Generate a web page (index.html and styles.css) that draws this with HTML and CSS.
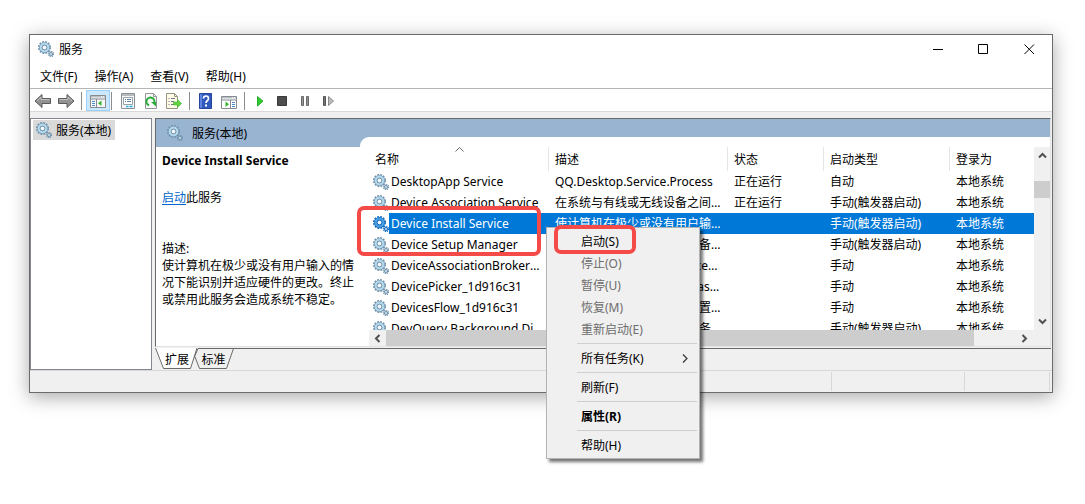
FILE: index.html
```html
<!DOCTYPE html>
<html lang="zh-CN">
<head>
<meta charset="utf-8">
<title>服务</title>
<link rel="stylesheet" href="styles.css">
</head>
<body>
<svg class="defs" aria-hidden="true">
  <symbol id="gear" viewBox="0 0 16 16">
    <circle class="gear-edge" cx="6.5" cy="6.5" r="5.7" fill="none" stroke-width="1.7" stroke-dasharray="1.8 1.18"/>
    <circle class="gear-edge" cx="6.5" cy="6.5" r="3.8" fill="none" stroke-width="3.4"/>
    <circle class="gear-ring" cx="6.5" cy="6.5" r="3.8" fill="none" stroke-width="2.3"/>
    <circle class="gear-edge" cx="6.5" cy="6.5" r="2.3" fill="#f6fafc" stroke-width=".9"/>
    <circle class="gear-edge" cx="13" cy="13" r="2.5" fill="none" stroke-width="1.4" stroke-dasharray="1.1 .86"/>
    <circle class="gear-edge" cx="13" cy="13" r="1.5" fill="#dcebf3" stroke-width="1.1"/>
  </symbol>
</svg>
<main class="window">
  <header class="titlebar">
    <svg class="icon"><use href="#gear"/></svg>
    <h1 class="title">服务</h1>
    <button class="caption" aria-label="最小化"><svg viewBox="0 0 11 11"><path d="M1 5.5h10"/></svg></button>
    <button class="caption" aria-label="最大化"><svg viewBox="0 0 11 11"><path d="M.5 .5h9v9h-9z"/></svg></button>
    <button class="caption" aria-label="关闭"><svg viewBox="0 0 11 11"><path d="M.5 .5l9.500 9.500M10 .5L.5 10"/></svg></button>
  </header>
  <nav class="menubar">
    <button>文件(F)</button><button>操作(A)</button><button>查看(V)</button><button>帮助(H)</button>
  </nav>
  <div class="toolbar">
    <button aria-label="后退"><svg class="wide" viewBox="0 0 18 16"><path d="M1 8l7-6.500v4h8.500v5H8v4z" fill="#929292" stroke="#595959"/><path d="M3 7.800l4-3.600v2.300h8.500" fill="none" stroke="#c2c2c2"/></svg></button>
    <button aria-label="前进"><svg class="wide" viewBox="0 0 18 16"><path d="M17 8l-7-6.500v4H1.500v5H10v4z" fill="#929292" stroke="#595959"/><path d="M2.500 6.500H11V4l4 3.800" fill="none" stroke="#c2c2c2"/></svg></button>
    <i class="rule"></i>
    <button class="pressed" aria-label="显示/隐藏控制台树"><svg viewBox="0 0 16 16"><path d="M.5 2.500h15v12H.5z" fill="#f7f7f7" stroke="#858b91"/><path d="M1 3h14v1.500H1z" fill="#b9c0c6"/><path d="M11 3.700h1M13 3.700h1" stroke="#fff"/><path d="M1 6h14M6.500 6v8" stroke="#858b91"/><path d="M2 8.500h3M2 10.500h3M2 12.500h3" stroke="#4f8dc8"/><path d="M11.500 7.500v5.500L8 10.200z" fill="#35b52c"/></svg></button>
    <i class="rule"></i>
    <button aria-label="属性"><svg viewBox="0 0 16 16"><path d="M1.500 .5h13v15h-13z" fill="#f4f6f7" stroke="#8b9094"/><path d="M2 1h12v2H2z" fill="#b4babf"/><path d="M3.500 4.500h9v7h-9z" fill="#fff" stroke="#9ba2a7"/><path d="M5 6.500h1M7 6.500h4M5 8.500h1M7 8.500h4" stroke="#5a7f9e"/><path d="M6 13.500h2.500M9.500 13.500h3" stroke="#26b5e8" stroke-width="1.500"/></svg></button>
    <button aria-label="刷新"><svg viewBox="0 0 16 16"><path d="M2.500 .5h8l3 3v12h-11z" fill="#f8f8f8" stroke="#94979a"/><path d="M10.500 .5v3h3" fill="none" stroke="#94979a"/><path d="M6 12.300A4 4 0 1 1 11.300 9.500" fill="none" stroke="#28ad38" stroke-width="2"/><path d="M8 9h5v4.500z" fill="#28ad38"/></svg></button>
    <button aria-label="导出列表"><svg viewBox="0 0 16 16"><path d="M.5 .5h8l3 3v12H.5z" fill="#fffbe7" stroke="#969482"/><path d="M8.500 .5v3h3" fill="none" stroke="#969482"/><path d="M2.500 5.500h1M5 5.500h4M2.500 8.500h1M5 8.500h3M2.500 11.500h1M5 11.500h3" stroke="#6d7890"/><path d="M7.500 9h4V6.500l4.200 4-4.200 4V12h-4z" fill="#61d242" stroke="#42b52e" stroke-width=".6"/></svg></button>
    <i class="rule"></i>
    <button aria-label="帮助"><svg viewBox="0 0 16 16"><path d="M1.500 .500h12v15h-12z" fill="#3058bd" stroke="#24449a"/><path d="M2 1h2v14H2z" fill="#5d83df"/><path d="M5.500 5.500Q5.500 3 8 3T10.500 5.500Q10.500 7 9 8Q8 8.800 8 10" fill="none" stroke="#fff" stroke-width="1.700"/><path d="M7 11.500h2v2H7z" fill="#fff"/></svg></button>
    <button aria-label="显示/隐藏操作窗格"><svg viewBox="0 0 16 16"><path d="M.5 3.500h15v12H.5z" fill="#fff" stroke="#858b91"/><path d="M1 4h14v1.500H1z" fill="#b9c0c6"/><path d="M11 4.700h1M13 4.700h1" stroke="#fff"/><path d="M1 7h14M9.500 7v8" stroke="#858b91"/><path d="M11 9.500h3M11 11.500h3M11 13.500h3" stroke="#4f8dc8"/><path d="M4.500 8.500v5.500L8 11.200z" fill="#35b52c"/></svg></button>
    <i class="rule"></i>
    <button aria-label="启动服务"><svg viewBox="0 0 16 16"><path d="M4.500 3.500v9.500L10 8.200z" fill="#34cb32" stroke="#20ad28"/></svg></button>
    <button aria-label="停止服务"><svg viewBox="0 0 16 16"><path d="M1.500 3.500h9v9h-9z" fill="#4d4d4d" stroke="#393939"/></svg></button>
    <button aria-label="暂停服务"><svg viewBox="0 0 16 16"><path d="M2.500 3.500h2v9h-2zM7.500 3.500h2v9h-2z" fill="#929292" stroke="#696969"/></svg></button>
    <button aria-label="重新启动服务"><svg viewBox="0 0 16 16"><path d="M1.500 3.500h2v9h-2z" fill="#777" stroke="#555"/><path d="M6.500 3.500v9l5-4.500z" fill="#bdbdbd" stroke="#8a8a8a"/></svg></button>
  </div>
  <div class="body">
    <aside class="tree"><button class="node"><svg class="icon"><use href="#gear"/></svg>服务(本地)</button></aside>
    <div class="content">
      <section class="pane">
        <div class="banner"><svg class="icon"><use href="#gear"/></svg><h2>服务(本地)</h2></div>
        <div class="split">
          <div class="details">
            <h3>Device Install Service</h3>
            <p class="action"><a href="#start">启动</a>此服务</p>
            <p>描述:</p>
            <p>使计算机在极少或没有用户输入的情况下能识别并适应硬件的更改。终止或禁用此服务会造成系统不稳定。</p>
          </div>
          <div class="list">
            <div class="viewport">
              <table>
                <colgroup><col class="c-name"><col class="c-desc"><col class="c-state"><col class="c-type"><col></colgroup>
                <thead><tr><th>名称<svg class="sort" viewBox="0 0 9 5"><path d="M.5 4.500l4-4 4 4" fill="none" stroke="#666"/></svg></th><th>描述</th><th>状态</th><th>启动类型</th><th>登录为</th></tr></thead>
                <tbody>
                  <tr><td><svg class="icon"><use href="#gear"/></svg><span>DesktopApp Service</span></td><td>QQ.Desktop.Service.Process</td><td>正在运行</td><td>自动</td><td>本地系统</td></tr>
                  <tr><td><svg class="icon"><use href="#gear"/></svg><span>Device Association Service</span></td><td>在系统与有线或无线设备之间匹配</td><td>正在运行</td><td>手动(触发器启动)</td><td>本地系统</td></tr>
                  <tr class="selected"><td><svg class="icon"><use href="#gear"/></svg><span>Device Install Service</span></td><td>使计算机在极少或没有用户输入的</td><td></td><td>手动(触发器启动)</td><td>本地系统</td></tr>
                  <tr><td><svg class="icon"><use href="#gear"/></svg><span>Device Setup Manager</span></td><td>启用检测、下载和安装与设备相关</td><td></td><td>手动(触发器启动)</td><td>本地系统</td></tr>
                  <tr><td><svg class="icon"><use href="#gear"/></svg><span>DeviceAssociationBroker_1d916c31</span></td><td>Enables apps to pair devices with the system</td><td></td><td>手动</td><td>本地系统</td></tr>
                  <tr><td><svg class="icon"><use href="#gear"/></svg><span>DevicePicker_1d916c31</span></td><td>此用户服务用于管理 Miracast、DLNA</td><td></td><td>手动</td><td>本地系统</td></tr>
                  <tr><td><svg class="icon"><use href="#gear"/></svg><span>DevicesFlow_1d916c31</span></td><td>允许用户从应用和电脑的设置连接</td><td></td><td>手动</td><td>本地系统</td></tr>
                  <tr><td><svg class="icon"><use href="#gear"/></svg><span>DevQuery Background Discovery Broker</span></td><td>使应用能够发现具有后台任务的设备</td><td></td><td>手动(触发器启动)</td><td>本地系统</td></tr>
                </tbody>
              </table>
            </div>
            <div class="vscroll">
              <button aria-label="向上"><svg viewBox="0 0 9 9"><path d="M1 6.500L4.500 3 8 6.500"/></svg></button>
              <i class="thumb"></i>
              <button aria-label="向下"><svg viewBox="0 0 9 9"><path d="M1 2.500L4.500 6 8 2.500"/></svg></button>
            </div>
            <div class="hscroll">
              <button aria-label="向左"><svg viewBox="0 0 9 9"><path d="M6.500 1L3 4.500 6.500 8"/></svg></button>
              <i class="thumb"></i>
              <button aria-label="向右"><svg viewBox="0 0 9 9"><path d="M2.500 1L6 4.500 2.500 8"/></svg></button>
            </div>
            <i class="mark mark-rows"></i>
            <div class="context" role="menu">
              <button role="menuitem">启动(S)</button>
              <button role="menuitem" disabled>停止(O)</button>
              <button role="menuitem" disabled>暂停(U)</button>
              <button role="menuitem" disabled>恢复(M)</button>
              <button role="menuitem" disabled>重新启动(E)</button>
              <hr>
              <button role="menuitem">所有任务(K)<svg viewBox="0 0 6 9"><path d="M1 .5l4 4-4 4" fill="none" stroke="#333" stroke-width="1.200"/></svg></button>
              <hr>
              <button role="menuitem">刷新(F)</button>
              <hr>
              <button role="menuitem" class="default">属性(R)</button>
              <hr>
              <button role="menuitem">帮助(H)</button>
              <i class="mark mark-start"></i>
            </div>
          </div>
        </div>
      </section>
      <div class="tabs">
        <button><svg viewBox="0 0 42 22"><path d="M0 0L8 21H35L42 0" fill="#fff"/><path d="M.5 0L8.500 20.500H35.500L42 0" fill="none" stroke="#696969"/></svg><span>扩展</span></button>
        <button><svg viewBox="0 0 40 22"><path d="M0 10L4 .5H39.500L32.500 20.500H5.500L1 9" fill="#f0f0f0" stroke="#696969"/></svg><span>标准</span></button>
        <i class="tabline"></i>
      </div>
    </div>
  </div>
  <footer class="status"><span></span><span></span><span></span></footer>
</main>
</body>
</html>
```
FILE: styles.css
```css
* { box-sizing: border-box; }
body {
  min-height: 100vh;
  margin: 0;
  padding: 34px 32px 40px 29px;
  background: #fff;
  color: #000;
  font: 12px/17px "Noto Sans", "Noto Sans CJK SC", sans-serif;
}
h1, h2, h3, p { margin: 0; font-size: 12px; font-weight: 400; }
button {
  margin: 0;
  padding: 0;
  border: 0;
  background: none;
  color: inherit;
  font: inherit;
}
.defs { position: absolute; width: 0; height: 0; }
.icon { width: 16px; height: 16px; flex: none; }
.gear-edge { stroke: var(--gear-edge, #6f92ad); }
.gear-ring { stroke: var(--gear-ring, #b4d8ea); }
.window {
  border: 1px solid #6b6b6b;
  background: #f0f0f0;
  box-shadow: 0 4px 18px rgba(0, 0, 0, .34);
}

.titlebar { display: flex; align-items: center; height: 30px; padding: 0 0 2px 8px; background: #fff; }
.title { flex: 1; margin-left: 5px; }
.caption { display: flex; align-items: center; justify-content: center; width: 46px; height: 28px; }
.caption svg { width: 11px; height: 11px; fill: none; stroke: #000; }

.menubar {
  display: flex;
  align-items: center;
  gap: 17px;
  height: 24px;
  padding-left: 10px;
  border-bottom: 1px solid #b4b4b4;
  background: #fff;
}

.toolbar {
  display: flex;
  align-items: center;
  height: 23px;
  padding: 1px 0 0 1px;
  border-bottom: 1px solid #d9d9d9;
  background: #fff;
}
.toolbar button { display: flex; align-items: center; justify-content: center; width: 23px; height: 21px; }
.toolbar svg { width: 16px; height: 16px; }
.toolbar .wide { width: 18px; }
.toolbar .pressed { width: 24px; margin-right: -3px; border: 1px solid #99d1ff; background: #cce8ff; }
.rule { width: 1px; height: 18px; margin: 0 4px; background: #8c8c8c; }

.body { display: flex; gap: 3px; padding-top: 6px; padding-right: 1px; }
.tree { width: 122px; padding: 1px 2px; border: 1px solid #828790; background: #fff; }
.node { display: flex; align-items: center; gap: 4px; height: 20px; padding: 0 4px 0 3px; background: #d9d9d9; }
.content { flex: 1; min-width: 0; }
.pane { border: 1px solid #e3e3e3; border-top: 1px solid #696969; border-left: 1px solid #696969; background: #fff; }
.banner { display: flex; align-items: center; gap: 9px; height: 28px; padding-left: 11px; background: #99b4d1; }
.split { display: flex; }
.details { width: 204px; padding: 5px 6px 0; }
.details h3 { margin-bottom: 20px; font-weight: 700; }
.details .action { margin-bottom: 34px; }
.details a { color: #0066cc; text-underline-offset: 2px; }

.list {
  position: relative;
  display: grid;
  grid-template-columns: minmax(0, 1fr) 16px;
  flex: 1;
  min-width: 0;
  padding-left: 9px;
}
.list::before {
  content: "";
  position: absolute;
  top: -10px;
  left: 0;
  right: 0;
  height: 10px;
  border-top-left-radius: 9px;
  background: #fff;
}
.viewport { height: 183px; overflow: hidden; }
table { width: 100%; border-collapse: separate; border-spacing: 0; table-layout: fixed; }
.c-name { width: 180px; }
.c-desc { width: 179px; }
.c-state { width: 96px; }
.c-type { width: 126px; }
th { position: relative; height: 24px; padding: 0 6px; border-right: 1px solid #e5e5e5; font-weight: 400; text-align: left; }
th:last-child { border-right: 0; }
.sort { position: absolute; top: 0; left: 86px; width: 9px; height: 5px; }
td { height: 21px; padding: 0 6px; overflow: hidden; white-space: nowrap; text-overflow: ellipsis; }
td:first-child { display: flex; align-items: center; padding: 0 6px 0 4px; }
td:first-child span { flex: 1; height: 21px; padding-left: 2px; overflow: hidden; line-height: 21px; text-overflow: ellipsis; }
.selected { color: #fff; }
.selected td:not(:first-child), .selected span { background: #0078d7; }
.selected td:first-child { padding-right: 0; }
.selected .icon { --gear-edge: #0b69bd; --gear-ring: #4d9fe0; }

.vscroll, .hscroll { display: flex; background: #f0f0f0; }
.vscroll { flex-direction: column; }
.hscroll { height: 16px; grid-column: 1 / -1; padding-right: 17px; }
.vscroll button, .hscroll button { display: flex; align-items: center; justify-content: center; width: 17px; height: 17px; }
.vscroll svg, .hscroll svg { width: 9px; height: 9px; fill: none; stroke: #505050; stroke-width: 2; }
.thumb { background: #cdcdcd; }
.vscroll .thumb { height: 17px; margin: 17px 0 auto; }
.hscroll .thumb { width: 88.5%; margin-right: auto; }

.mark { position: absolute; border: 4px solid #f54b48; border-radius: 7px; pointer-events: none; }
.mark-rows { top: 59px; left: -3px; width: 184px; height: 50px; }
.context {
  position: absolute;
  top: 80px;
  left: 186px;
  width: 154px;
  padding: 2px;
  border: 1px solid #b4b4b4;
  background: #f0f0f0;
  box-shadow: 3px 3px 3px rgba(0, 0, 0, .55);
}
.context button { display: flex; align-items: center; justify-content: space-between; width: 100%; height: 22px; padding: 0 9px 0 32px; }
.context button:disabled { color: #6d6d6d; }
.context svg { width: 6px; height: 9px; }
.context hr { height: 1px; margin: 3px 0 3px 28px; border: 0; background: #d0d0d0; }
.context .default { font-weight: 700; }
.mark-start { top: -3px; left: 7px; width: 82px; height: 29px; }

.tabs { display: flex; height: 23px; padding-top: 1px; }
.tabs button { position: relative; width: 44px; height: 21px; padding-top: 1px; }
.tabs button + button { width: 39px; margin-left: -5px; }
.tabs svg { position: absolute; top: 0; left: 0; width: 42px; height: 22px; }
.tabs button + button svg { width: 40px; }
.tabs span { position: relative; }
.tabline { flex: 1; height: 1px; background: #696969; }

.status { display: flex; height: 22px; padding: 1px 2px 1px 0; border-top: 1px solid #d7d7d7; }
.status span { width: 85px; border-right: 1px solid #d7d7d7; }
.status span:first-child { flex: 1; }
.status span:nth-child(2) { width: 133px; }
```
